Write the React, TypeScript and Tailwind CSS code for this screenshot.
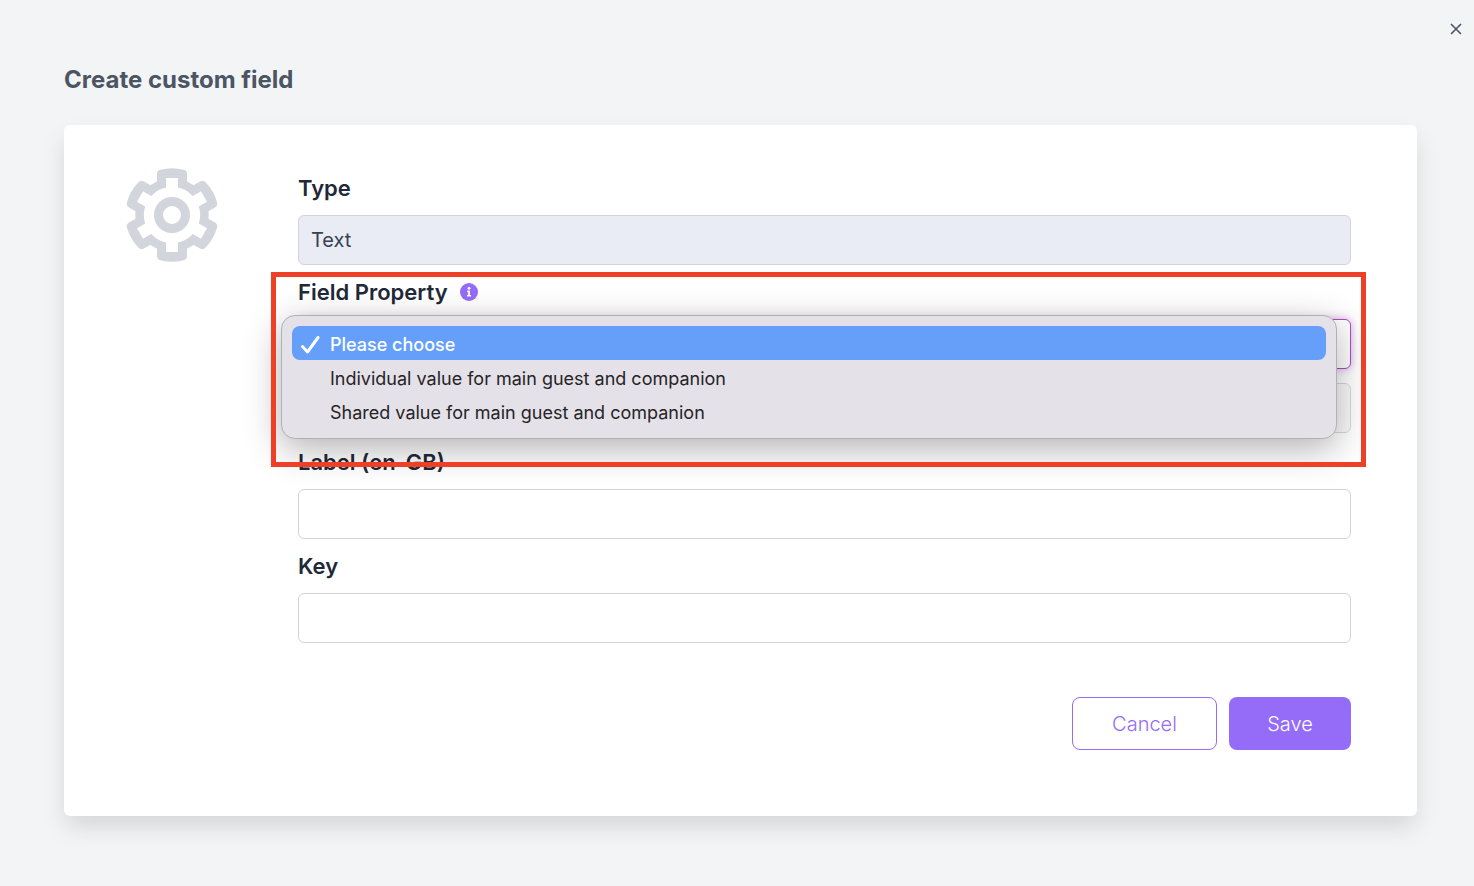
import React, { useState } from "react";
import clsx from "clsx";

interface FieldProps {
  id: string;
  label: string;
  value: string;
  onChange?: (value: string) => void;
  readOnly?: boolean;
}

const OPTIONS = [
  { label: "Please choose", value: "" },
  { label: "Individual value for main guest and companion", value: "individual" },
  { label: "Shared value for main guest and companion", value: "shared" },
];

const labelClass = "text-[22px] leading-[30px] font-semibold text-[#1f2937]";
const controlClass = "block h-[50px] w-full rounded-md border px-3 text-[20px] text-[#374151] outline-none";

const GearIcon = () => (
  <svg viewBox="-47 -47 94 94" className="size-[94px] text-[#d2d5dc]" aria-hidden="true">
    {/* body, teeth rounded by the stroke */}
    <path
      fill="currentColor"
      stroke="currentColor"
      strokeWidth="9"
      strokeLinejoin="round"
      d="M-10.5 -31V-41A42 42 0 0 1 10.5 -41V-31L21.6 -24.6L30.25 -29.6A42 42 0 0 1 40.75 -11.4L32.1 -6.4V6.4L40.75 11.4A42 42 0 0 1 30.25 29.6L21.6 24.6L10.5 31V41A42 42 0 0 1 -10.5 41V31L-21.6 24.6L-30.25 29.6A42 42 0 0 1 -40.75 11.4L-32.1 6.4V-6.4L-40.75 -11.4A42 42 0 0 1 -30.25 -29.6L-21.6 -24.6Z"
    />
    <path
      fill="#fff"
      d="M-6 -37H6V-27.5A28 28 0 0 1 20.8 -18.9L29 -23.7L35 -13.3L26.8 -8.6A28 28 0 0 1 26.8 8.6L35 13.3L29 23.7L20.8 18.9A28 28 0 0 1 6 27.5V37H-6V27.5A28 28 0 0 1 -20.8 18.9L-29 23.7L-35 13.3L-26.8 8.6A28 28 0 0 1 -26.8 -8.6L-35 -13.3L-29 -23.7L-20.8 -18.9A28 28 0 0 1 -6 -27.5Z"
    />
    <circle r="13.5" fill="none" stroke="currentColor" strokeWidth="9" />
  </svg>
);

const InfoIcon = () => (
  <svg viewBox="0 0 18 18" className="size-[18px]" aria-hidden="true">
    <circle cx="9" cy="9" r="9" fill="#946cf7" />
    <circle cx="9" cy="5.3" r="1.4" fill="#fff" />
    <path d="M7.2 7.6h2.7v4.3h1.1v1.7H7v-1.7h1.1V9.3h-.9z" fill="#fff" />
  </svg>
);

const TextField = ({ id, label, value, onChange, readOnly }: FieldProps) => (
  <div>
    <label htmlFor={id} className={clsx("mb-3 block", labelClass)}>
      {label}
    </label>
    <input
      id={id}
      type="text"
      value={value}
      readOnly={readOnly}
      onChange={(e) => onChange?.(e.target.value)}
      className={clsx(controlClass, "border-[#d2d5dc]", readOnly ? "bg-[#e9ecf5]" : "bg-white")}
    />
  </div>
);

export default function App() {
  const [property, setProperty] = useState("");
  const [isOpen, setIsOpen] = useState(true);
  const [label, setLabel] = useState("");
  const [key, setKey] = useState("");

  const handleSelect = (value: string) => {
    setProperty(value);
    setIsOpen(false);
  };

  return (
    <div className="min-h-screen bg-[#f3f4f6] pb-[70px] pl-16 pr-[57px] font-['Inter',sans-serif]">
      <header className="flex items-start justify-between pt-5">
        <h1 className="mt-11 text-[24px] leading-8 font-bold text-[#4b5563]">Create custom field</h1>
        <button type="button" aria-label="Close" className="-mr-12 flex size-[18px] items-center justify-center text-[#4b5563]">
          <svg viewBox="0 0 12 12" className="size-3" stroke="currentColor" strokeWidth="1.6" aria-hidden="true">
            <path d="M1 1l10 10M11 1L1 11" />
          </svg>
        </button>
      </header>

      <main className="mt-[29px] flex rounded-md bg-white pt-12 pr-[66px] pb-[66px] pl-[61px] shadow-[0_12px_24px_-2px_rgba(0,0,0,0.13)]">
        <div className="-mt-[5px] w-[173px] shrink-0">
          <GearIcon />
        </div>

        <form className="min-w-0 flex-1" onSubmit={(e) => e.preventDefault()}>
          <TextField id="type" label="Type" value="Text" readOnly />

          <div className="relative mt-3">
            <div className="mb-3 flex items-center gap-3">
              <label htmlFor="property" className={labelClass}>
                Field Property
              </label>
              <InfoIcon />
            </div>
            <select
              id="property"
              value={property}
              onChange={(e) => setProperty(e.target.value)}
              onFocus={() => setIsOpen(true)}
              className={clsx(controlClass, "appearance-none border-[#a94fc0] bg-white shadow-[0_0_8px_rgba(169,79,192,0.5)]")}
            >
              {OPTIONS.map((option) => (
                <option key={option.value} value={option.value}>
                  {option.label}
                </option>
              ))}
            </select>
            <input
              type="text"
              aria-label="Property value"
              disabled
              className={clsx(controlClass, "mt-[14px] border-[#d8d8da] bg-[#fafafa]")}
            />

            {isOpen && (
              <ul
                role="listbox"
                aria-label="Field Property"
                className="absolute top-[38px] -left-[17px] right-[14px] z-10 rounded-[14px] border border-[#b3afb5] bg-[#e5e1e8] p-[10px] shadow-[0_10px_36px_rgba(0,0,0,0.3)]"
              >
                {OPTIONS.map((option) => (
                  <li
                    key={option.value}
                    role="option"
                    aria-selected={option.value === property}
                    onClick={() => handleSelect(option.value)}
                    className={clsx(
                      "flex h-[34px] cursor-default items-center rounded-lg pt-0.5 pl-2 text-[18px]",
                      option.value === property ? "bg-[#659ff9] font-medium text-white" : "text-[#252427]"
                    )}
                  >
                    <span className="w-[30px] shrink-0">
                      {option.value === property && (
                        <svg viewBox="0 0 20 20" className="mt-0.5 size-5" fill="none" stroke="currentColor" strokeWidth="3" strokeLinecap="round" strokeLinejoin="round" aria-hidden="true">
                          <path d="M2.5 11.5L7.5 17L18 2.5" />
                        </svg>
                      )}
                    </span>
                    {option.label}
                  </li>
                ))}
              </ul>
            )}

            {/* highlight frame around the open field */}
            <div className="pointer-events-none absolute -top-[5px] -right-[15px] -bottom-[34px] -left-[27px] z-20 border-[5px] border-[#ee4026]" />
          </div>

          <div className="mt-[14px] flex flex-col gap-3">
            <TextField id="label" label="Label (en-GB)" value={label} onChange={setLabel} />
            <TextField id="key" label="Key" value={key} onChange={setKey} />
          </div>

          <div className="mt-[54px] flex justify-end gap-3">
            <button type="button" className="h-[53px] w-[145px] rounded-lg border border-[#946cf7] bg-white text-[20px] font-light text-[#946cf7]">
              Cancel
            </button>
            <button type="submit" className="h-[53px] w-[122px] rounded-lg bg-[#946cf7] text-[20px] font-light text-white">
              Save
            </button>
          </div>
        </form>
      </main>
    </div>
  );
}
